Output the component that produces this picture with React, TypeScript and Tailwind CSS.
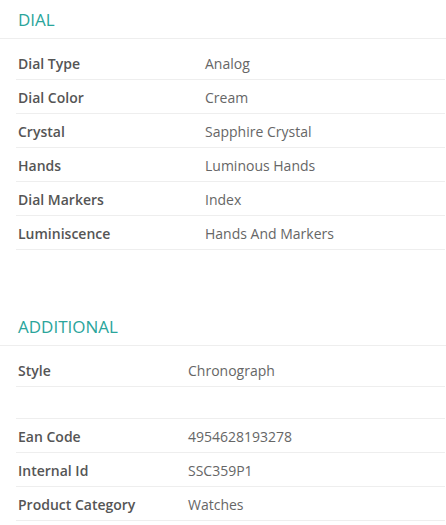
type Row = [string, string];

const dial: Row[] = [
  ['Dial Type', 'Analog'],
  ['Dial Color', 'Cream'],
  ['Crystal', 'Sapphire Crystal'],
  ['Hands', 'Luminous Hands'],
  ['Dial Markers', 'Index'],
  ['Luminiscence', 'Hands And Markers'],
];

const additional: Row[] = [
  ['Style', 'Chronograph'],
  ['', ''],
  ['Ean Code', '4954628193278'],
  ['Internal Id', 'SSC359P1'],
  ['Product Category', 'Watches'],
];

function Section({ title, rows, labelWidth }: { title: string; rows: Row[]; labelWidth: string }) {
  return (
    <section>
      <h3 className="pt-[8px] pb-[6px] pl-[18px] text-[17px] leading-[24px] text-[#2aa59b] border-b border-[#eeeeee]">
        {title}
      </h3>
      <div className="ml-[16px] mr-[1px] pt-[7px]">
        {rows.map(([label, value], i) => (
          <div
            key={i}
            className={`flex items-center border-b border-[#eeeeee] pt-[3px] text-[14px] leading-[20px] ${
              label ? 'h-[34px]' : 'h-[32px]'
            }`}
          >
            <div className={`${labelWidth} shrink-0 pl-[2px] font-semibold text-[#555555]`}>{label}</div>
            <div className="text-[#666666]">{value}</div>
          </div>
        ))}
      </div>
    </section>
  );
}

export default function App() {
  return (
    <div className="w-[446px] h-[525px] bg-white overflow-hidden" style={{ fontFamily: '"Open Sans", Arial, sans-serif' }}>
      <Section title="DIAL" rows={dial} labelWidth="w-[189px]" />
      <div className="mt-[57px]">
        <Section title="ADDITIONAL" rows={additional} labelWidth="w-[172px]" />
      </div>
    </div>
  );
}
